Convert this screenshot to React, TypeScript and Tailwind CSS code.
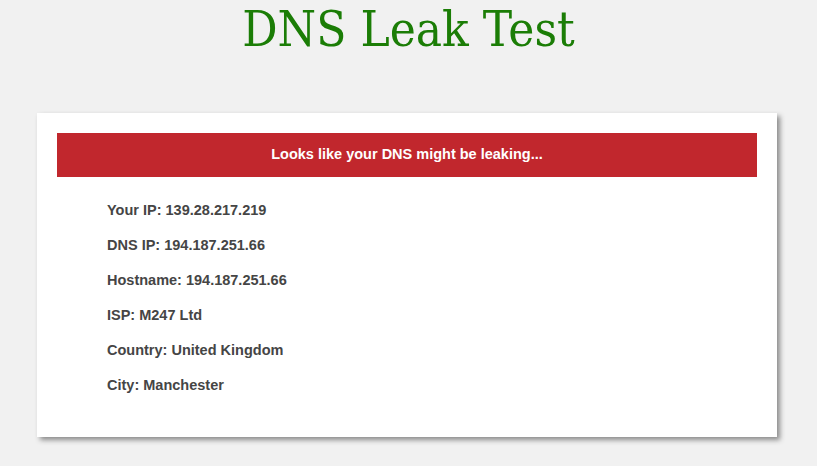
export default function App() {
    const rows = [
        'Your IP: 139.28.217.219',
        'DNS IP: 194.187.251.66',
        'Hostname: 194.187.251.66',
        'ISP: M247 Ltd',
        'Country: United Kingdom',
        'City: Manchester',
    ];

    return (
        <div className="min-h-[466px] bg-[#f1f1f1] pt-px">
            <h1 className="mt-[1px] text-center font-['DejaVu_Serif_Condensed','DejaVu_Serif',serif] text-[49px] leading-[56px] text-[#1b7d06]">
                DNS Leak Test
            </h1>

            <div className="ml-[37px] mt-[55px] w-[740px] bg-white px-5 pt-5 pb-[44px] shadow-[3px_3px_5px_#8a8a8a]">
                <div className="flex h-[44px] items-center justify-center bg-[#c1272d] font-['Liberation_Sans',sans-serif] text-[14.5px] font-bold text-white">
                    Looks like your DNS might be leaking...
                </div>

                <div className="flex flex-col gap-[19px] pl-[50px] pt-[25px] font-['Liberation_Sans',sans-serif] text-[14.5px] font-bold leading-[16px] text-[#454545]">
                    {rows.map((row) => (
                        <div key={row}>{row}</div>
                    ))}
                </div>
            </div>
        </div>
    );
}
